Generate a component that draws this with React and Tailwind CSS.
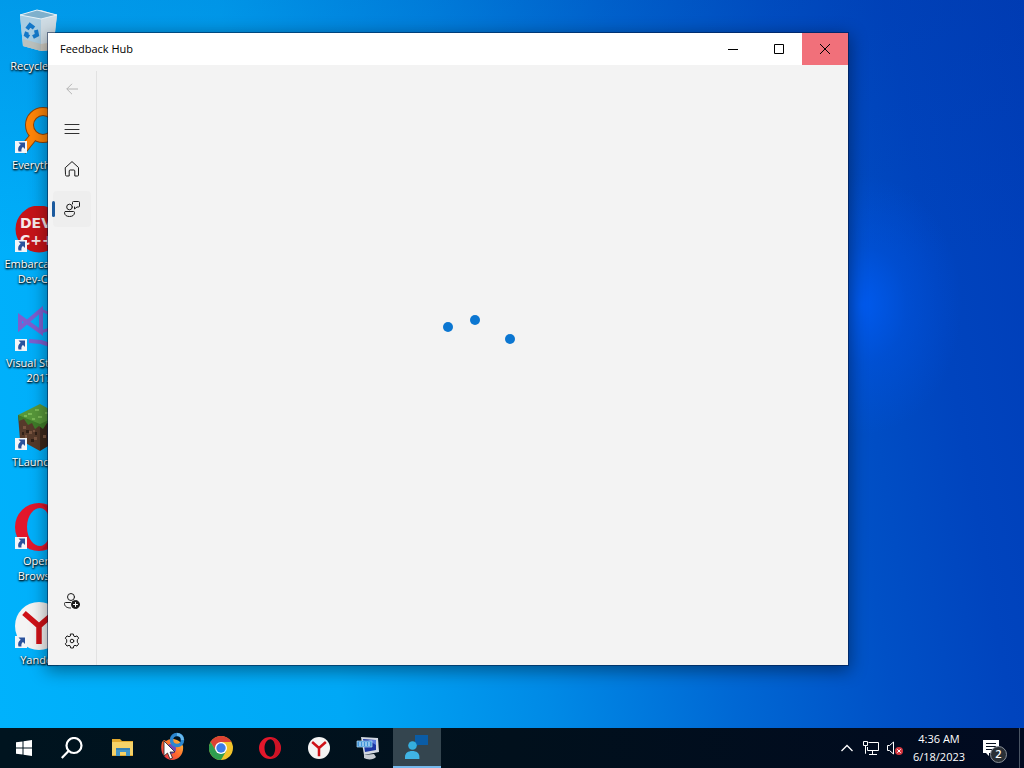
import React, { useState } from "react";

// ---- Desktop icons ----

const BinIcon = () => (
  <svg viewBox="0 0 48 48" className="size-12">
    <path d="M5 7 L26 2 L42 7 L38 42 L26 43 L8 38 Z" fill="#c3d6e2" />
    <path d="M5 7 L26 11 L26 43 L8 38 Z" fill="#a9cde2" />
    <path d="M26 11 L42 7 L38 42 L26 43 Z" fill="#cfdce4" />
    <path d="M5 7 L22 2 L42 7 L26 11 Z" fill="#7fb0cc" stroke="#e6f1f7" />
    <path d="M8 31 L26 36 L39 34 L38 42 L26 43 L8 38 Z" fill="#cdb79c" opacity=".5" />
    <g fill="none" stroke="#1478c8" strokeWidth="4">
      <path d="M12 21 L15 17 L19 20" />
      <path d="M21 22 L22 27 L18 29" />
      <path d="M14 29 L11 27 L12 24" />
    </g>
  </svg>
);

const EverythingIcon = () => (
  <svg viewBox="0 0 48 48" className="size-12">
    <path d="M19 29 L7 44" stroke="#8a4208" strokeWidth="9" />
    <circle cx="28" cy="18" r="13.500" fill="none" stroke="#8a4208" strokeWidth="9" />
    <path d="M19 29 L7 44" stroke="#ff8508" strokeWidth="7" />
    <circle cx="28" cy="18" r="13.500" fill="none" stroke="#ff8508" strokeWidth="7" />
  </svg>
);

const DevIcon = () => (
  <svg viewBox="0 0 48 48" className="size-12">
    <circle cx="24" cy="23" r="23.500" fill="#c51419" />
    <g fill="#f6e9e9" fontFamily="DejaVu Sans, sans-serif" fontWeight="bold" fontSize="14">
      <text x="5" y="22">DEV</text>
      <text x="5" y="39">C++</text>
    </g>
  </svg>
);

const VisualStudioIcon = () => (
  <svg viewBox="0 0 48 48" className="size-12" fill="none" stroke="#7d5fcf">
    <path d="M5 12 L26 27 L26 5 L5 23 Z" strokeWidth="4" />
    <path d="M26 5 L35 9 L35 24 L26 27" strokeWidth="3" />
    <path d="M14 36 L26 37 L38 41" strokeWidth="4" />
  </svg>
);

const GrassIcon = () => (
  <svg viewBox="0 0 48 48" className="size-12">
    <path d="M3 11 L25 20 L25 47 L5 36 Z" fill="#563a2a" />
    <path d="M25 20 L45 11 L43 36 L25 47 Z" fill="#3b271b" />
    <path d="M3 11 L25 0 L45 11 L25 22 Z" fill="#57973a" />
    <path d="M3 11 L25 20 L45 11 L44 17 L40 16 L36 21 L32 19 L28 25 L24 22 L20 25 L17 19 L13 21 L9 15 L4 17 Z" fill="#3f7b29" />
    <path d="M8 22h3v3H8zM14 27h3v3h-3zM19 33h3v3h-3zM10 31h2v3h-2zM18 26h2v2h-2zM28 31h3v3h-3z" fill="#7a5540" />
    <path d="M13 9h4v2h-4zM20 5h4v2h-4zM23 12h4v2h-4zM30 8h4v2h-4zM17 14h3v2h-3zM9 11h3v2H9z" fill="#79b854" />
    <path d="M11 26h3v3h-3zM16 35h3v3h-3zM20 28h2v3h-2zM7 28h2v3H7z" fill="#302017" />
  </svg>
);

const OperaIcon = ({ className }) => (
  <svg viewBox="0 0 48 48" className={className}>
    <path
      fillRule="evenodd"
      d="M24 0a24 24 0 1 0 0 48a24 24 0 1 0 0-48M25 5c6 0 10.500 8 10.500 19s-4.500 19-10.500 19s-13-7-13-19S19 5 25 5"
      fill="#e3172b"
    />
    <path d="M25 1c14 2 22 10 22 23S38 46 25 47c7-3 10-11 10-23S32 4 25 1" fill="#b90f20" opacity=".5" />
  </svg>
);

const YandexIcon = ({ className }) => (
  <svg viewBox="0 0 48 48" className={className}>
    <circle cx="24" cy="24" r="24" fill="#f4f4f4" />
    <path d="M9 11 L24 24 L39 11 M24 23 V42" fill="none" stroke="#cf1117" strokeWidth="5.500" />
  </svg>
);

const ShortcutArrow = () => (
  <svg viewBox="0 0 12 12" className="absolute top-[34px] left-0 size-3">
    <rect width="12" height="12" fill="#f3f5f8" />
    <path d="M3.500 1.500H10V8L8 6C6.500 7 6.200 8.500 6.500 10.500H3.500C2.500 7.500 3.500 5 5.700 3.700Z" fill="#2a529c" />
  </svg>
);

const shortcuts = [
  { label: "Recycle Bin", icon: <BinIcon />, noArrow: true },
  { label: "Everything", icon: <EverythingIcon /> },
  { label: "Embarcadero Dev-C++", icon: <DevIcon /> },
  { label: "Visual Studio 2017", icon: <VisualStudioIcon /> },
  { label: "TLauncher", icon: <GrassIcon /> },
  { label: "Opera Browser", icon: <OperaIcon className="size-12" /> },
  { label: "Yandex", icon: <YandexIcon className="size-12" /> },
];

function DesktopIcons() {
  return (
    <div className="grid w-[78px] auto-rows-[99px]">
      {shortcuts.map((s) => (
        <button key={s.label} type="button" className="flex flex-col items-center px-0.5 pt-2">
          <span className="relative block size-12">
            {s.icon}
            {!s.noArrow && <ShortcutArrow />}
          </span>
          <span className="mt-0.5 text-[11px] leading-[15px] text-white [text-shadow:0_1px_2px_#000,1px_1px_2px_#000]">
            {s.label}
          </span>
        </button>
      ))}
    </div>
  );
}

// ---- Feedback Hub window ----

const NavSvg = ({ children }) => (
  <svg viewBox="0 0 16 16" className="size-4" fill="none" stroke="currentColor" strokeLinejoin="round" strokeLinecap="round">
    {children}
  </svg>
);

const topNav = [
  {
    id: "menu",
    label: "Open navigation",
    icon: <path d="M1 3.500h14M1 8.500h14M1 12.500h14" strokeWidth=".9" />,
  },
  {
    id: "home",
    label: "Home",
    icon: <path d="M1.500 6.500 8 .6l6.500 5.900V14a1 1 0 0 1-1 1h-2.700V10a1 1 0 0 0-1-1H6.200a1 1 0 0 0-1 1v5H2.500a1 1 0 0 1-1-1Z" />,
  },
  {
    id: "feedback",
    label: "Feedback",
    icon: (
      <>
        <path d="M8.500 3V1.500a1 1 0 0 1 1-1h5a1 1 0 0 1 1 1v3.500a1 1 0 0 1-1 1h-1.500L10.500 8v-2" />
        <circle cx="5.500" cy="6" r="2.800" />
        <path d="M1.500 10.500h8a1 1 0 0 1 1 1c0 2.700-2 4-5 4s-5-1.300-5-4a1 1 0 0 1 1-1Z" />
      </>
    ),
  },
];

const bottomNav = [
  {
    id: "signin",
    label: "Sign in",
    icon: (
      <>
        <circle cx="7" cy="4" r="3.500" />
        <path d="M6.500 9.500h-5a1 1 0 0 0-1 1c0 3 2.500 4.500 6 4.500" />
        <circle cx="11.500" cy="11.500" r="4" fill="#1a1a1a" />
        <path d="M11.500 9.500v4M9.500 11.500h4" stroke="#fff" />
      </>
    ),
  },
  {
    id: "settings",
    label: "Settings",
    icon: (
      <>
        <path d="M6.700 1h2.600l.5 2.100 1.200.6 2-.8 1.700 2.200-1.400 1.700v2.400l1.400 1.700-1.700 2.200-2-.8-1.200.6L9.300 15H6.700l-.5-2.100-1.200-.6-2 .8-1.700-2.200 1.400-1.700V6.800L1.300 5.100 3 2.900l2 .8 1.200-.6Z" />
        <circle cx="8" cy="8" r="1.800" />
      </>
    ),
  },
];

function NavButton({ item, active, onClick }) {
  return (
    <button
      type="button"
      aria-label={item.label}
      onClick={onClick}
      className={`relative flex h-9 w-[38px] items-center justify-center rounded text-[#1a1a1a] ${
        active ? "bg-[#eeeeee]" : ""
      }`}
    >
      {active && <span className="absolute top-2.5 -left-px h-4 w-[3px] rounded-full bg-[#1b5a9e]" />}
      <NavSvg>{item.icon}</NavSvg>
    </button>
  );
}

function FeedbackHub() {
  const [page, setPage] = useState("feedback");

  return (
    <section className="absolute top-[33px] left-12 flex h-[632px] w-[800px] flex-col bg-[#f3f3f3] shadow-[0_0_0_1px_rgba(0,20,60,0.5),0_4px_16px_2px_rgba(0,0,0,0.4)]">
      <header className="flex h-8 items-center bg-white pl-3 text-black">
        <h1 className="flex-1 text-[11px]">Feedback Hub</h1>
        <button type="button" aria-label="Minimize" className="flex h-8 w-[46px] items-center justify-center">
          <svg viewBox="0 0 10 10" className="size-2.5" stroke="#000">
            <path d="M0 5.500h10" />
          </svg>
        </button>
        <button type="button" aria-label="Maximize" className="flex h-8 w-[46px] items-center justify-center">
          <svg viewBox="0 0 10 10" className="size-2.5" fill="none" stroke="#000">
            <path d="M.5.5h9v9h-9Z" />
          </svg>
        </button>
        <button type="button" aria-label="Close" className="flex h-8 w-[46px] items-center justify-center bg-[#f1707a]">
          <svg viewBox="0 0 10 10" className="size-2.5" stroke="#000">
            <path d="M0 0l10 10M10 0L0 10" />
          </svg>
        </button>
      </header>

      <div className="flex flex-1">
        <nav className="mt-1.5 flex flex-col gap-1 border-r border-[#e2e2e2] px-[5px] pb-1.5">
          <button type="button" aria-label="Back" disabled className="flex h-9 w-[38px] items-center justify-center text-[#b4b4b4]">
            <svg viewBox="0 0 12 12" className="size-3" fill="none" stroke="currentColor">
              <path d="M12 6H.8M6 .8.8 6 6 11.200" />
            </svg>
          </button>
          {topNav.map((item) => (
            <NavButton key={item.id} item={item} active={page === item.id} onClick={() => setPage(item.id)} />
          ))}
          <div className="flex-1" />
          {bottomNav.map((item) => (
            <NavButton key={item.id} item={item} active={page === item.id} onClick={() => setPage(item.id)} />
          ))}
        </nav>
        <main className="flex flex-1 items-center justify-center">
          <svg viewBox="0 0 100 100" className="size-25" fill="#0b76d1" role="progressbar" aria-label="Loading">
            <circle cx="25" cy="12" r="5" />
            <circle cx="52" cy="5" r="5" />
            <circle cx="87" cy="24" r="5" />
          </svg>
        </main>
      </div>
    </section>
  );
}

// ---- Taskbar ----

const ExplorerIcon = () => (
  <svg viewBox="0 0 24 24" className="size-6">
    <path d="M1 3h8l2 2h11v15H1Z" fill="#e2a92e" />
    <path d="M1 6h21v13H1Z" fill="#f6d268" />
    <path d="M5 12h14v8h-4v-4H9v4H5Z" fill="#4195c9" />
    <path d="M5 12h14v2H5Z" fill="#3580b4" />
  </svg>
);

const FirefoxIcon = () => (
  <svg viewBox="0 0 24 24" className="size-6">
    <defs>
      <linearGradient id="fox" x1="1" y1="0" x2="0" y2="1">
        <stop offset="0" stopColor="#ffc83a" />
        <stop offset=".5" stopColor="#ff6a2e" />
        <stop offset="1" stopColor="#e02850" />
      </linearGradient>
    </defs>
    <path d="M2 6l2-2 2 1c5-4 14-2 17 5c1 8-4 14-11 14S-1 17 2 6" fill="url(#fox)" />
    <circle cx="11" cy="13" r="5" fill="#7446b8" />
  </svg>
);

const ChromeIcon = () => (
  <svg viewBox="0 0 24 24" className="size-6">
    <circle cx="12" cy="12" r="12" fill="#f2c32b" />
    <path d="M12 6H22.400A12 12 0 0 0 1.600 6L7 15Z" fill="#dc4233" />
    <path d="M1.600 6A12 12 0 0 0 12 24L17.200 15 12 17 7 15Z" fill="#2f9e4f" />
    <circle cx="12" cy="12" r="6" fill="#fff" />
    <circle cx="12" cy="12" r="4.700" fill="#3c7de8" />
  </svg>
);

const ComputerIcon = () => (
  <svg viewBox="0 0 24 24" className="size-6">
    <path d="M8 19 18 18l2 3c-2 3-9 3-12 1Z" fill="#c8cdd3" />
    <path d="M5 1 22 2 23 16 8 19Z" fill="#d3d9e2" />
    <path d="M7 3 20 4 20 14 9 16Z" fill="#1c37a4" />
    <path d="M12 4 20 4v5Z" fill="#5879dd" />
    <path d="M1 5h15v6H1Z" fill="#4194d8" stroke="#b8dcf5" strokeWidth=".7" />
    <path d="M3 7h11M3 9h11" stroke="#e2f3ff" strokeDasharray="2 1" />
  </svg>
);

const HubIcon = () => (
  <svg viewBox="0 0 24 24" className="size-6">
    <path d="M10 0h13v10H13l-3 2Z" fill="#0a5ca6" />
    <circle cx="7.500" cy="10.500" r="4.300" fill="#35aede" />
    <path d="M0 24v-2c0-4 3-6 7.200-6s7.200 2 7.200 6v2Z" fill="#40b4e4" />
  </svg>
);

const pinned = [
  { label: "File Explorer", icon: <ExplorerIcon /> },
  { label: "Firefox", icon: <FirefoxIcon /> },
  { label: "Chrome", icon: <ChromeIcon /> },
  { label: "Opera", icon: <OperaIcon className="size-[22px]" /> },
  { label: "Yandex", icon: <YandexIcon className="size-[22px]" /> },
  { label: "Remote Computer", icon: <ComputerIcon /> },
  { label: "Feedback Hub", icon: <HubIcon />, active: true },
];

function Taskbar() {
  return (
    <footer className="flex h-10 items-stretch bg-linear-to-r from-[#00141f] via-[#01101c] to-[#010a20] text-white">
      <button type="button" aria-label="Start" className="flex w-12 items-center justify-center">
        <svg viewBox="0 0 16 16" className="size-4" fill="#fff">
          <path d="M0 2.300 6.500 1.400V7.500H0ZM7.500 1.200 16 0V7.500H7.500ZM0 8.500H6.500V14.600L0 13.700ZM7.500 8.500H16V16L7.500 14.800Z" />
        </svg>
      </button>
      <button type="button" aria-label="Search" className="mr-[3px] flex w-12 items-center justify-center">
        <svg viewBox="0 0 22 22" className="size-[22px]" fill="none" stroke="#fff" strokeWidth="2.200">
          <circle cx="13" cy="8.500" r="7.500" />
          <path d="M7.800 13.800.8 21" />
        </svg>
      </button>
      <div className="flex gap-px">
        {pinned.map((app) => (
          <button
            key={app.label}
            type="button"
            aria-label={app.label}
            className={`flex w-12 items-center justify-center ${
              app.active ? "border-b-2 border-[#76b9ed] bg-[#34454f]" : ""
            }`}
          >
            {app.icon}
          </button>
        ))}
      </div>

      <div className="ml-auto flex items-center">
        <button type="button" aria-label="Show hidden icons" className="flex w-6 justify-center">
          <svg viewBox="0 0 12 12" className="size-3" fill="none" stroke="#fff" strokeWidth="1.300">
            <path d="M.5 9 6 3.500 11.500 9" />
          </svg>
        </button>
        <button type="button" aria-label="Network" className="flex w-6 justify-center">
          <svg viewBox="0 0 16 16" className="size-4" fill="none" stroke="#fff">
            <path d="M5.500 2.500h10v8h-11V7M9.500 10.500v3M6 14.500h8M9.500 13v1.500M2.500 6v7.500H3" />
            <path d="M.5 1.500h4v4h-4Z" />
          </svg>
        </button>
        <button type="button" aria-label="Volume muted" className="flex w-6 justify-center">
          <svg viewBox="0 0 16 16" className="size-4" fill="none" stroke="#fff">
            <path d="M.5 5.500h2L6.500 2v12L2.500 10.500h-2Z" />
            <circle cx="12" cy="11" r="4" fill="#d63840" stroke="none" />
            <path d="M10.300 9.300l3.400 3.400M13.700 9.300l-3.400 3.400" />
          </svg>
        </button>
        <button type="button" className="w-16 text-center text-[11px] leading-[18px] whitespace-nowrap">
          <span className="block">4:36 AM</span>
          <span className="block">6/18/2023</span>
        </button>
        <button type="button" aria-label="Notifications" className="relative flex h-full w-12 items-center pl-3">
          <svg viewBox="0 0 16 16" className="size-4">
            <path d="M0 0h16v13H6v3l-3-3H0Z" fill="#fff" />
            <path d="M3 3.500h10M3 6.500h10M3 9.500h7" stroke="#06101f" />
          </svg>
          <span className="absolute top-[18px] left-[19px] flex size-[17px] items-center justify-center rounded-full border border-[#8a9098] bg-[#2a3036] text-[11px] font-semibold">
            2
          </span>
        </button>
        <button type="button" aria-label="Show desktop" className="h-full w-[5px] border-l border-[#4a5564]" />
      </div>
    </footer>
  );
}

// arrow pointer with the busy ring next to it
const Cursor = () => (
  <svg viewBox="0 0 24 30" className="pointer-events-none absolute bottom-1.5 left-[163px] h-[30px] w-6">
    <circle cx="14" cy="8" r="5.500" fill="none" stroke="#2a86cf" strokeWidth="3.500" />
    <path d="M14 2.500a5.500 5.500 0 0 1 5.500 5.500" fill="none" stroke="#68b8ec" strokeWidth="3" />
    <path d="M1 9v15l3.500-3 2.500 6 2.500-1-2.500-6H12Z" fill="#fff" stroke="#222" strokeWidth=".8" />
  </svg>
);

export default function App() {
  return (
    <div className="relative flex min-h-screen flex-col overflow-hidden font-['Open_Sans','Noto_Sans',sans-serif]">
      <div className="relative flex-1 bg-[radial-gradient(ellipse_100px_130px_at_862px_305px,rgba(0,92,244,0.85)_0%,rgba(0,88,238,0.35)_45%,rgba(0,88,238,0)_100%),linear-gradient(180deg,rgba(0,50,150,0.16)_0%,rgba(0,50,150,0)_35%),linear-gradient(80deg,#00b2fc_0%,#00a8f6_30%,#008ae6_48%,#0068d4_64%,#0050c6_78%,#0044be_88%,#003db8_100%)]">
        <DesktopIcons />
        <FeedbackHub />
      </div>
      <Taskbar />
      <Cursor />
    </div>
  );
}
